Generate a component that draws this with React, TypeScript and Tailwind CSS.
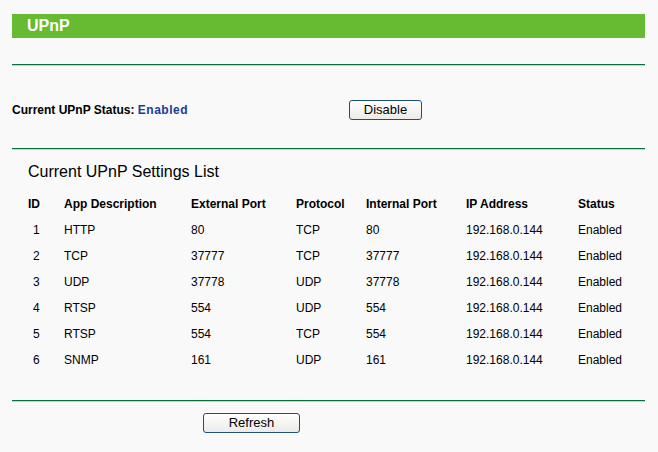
import React from "react";

const rows = [
  ["1", "HTTP", "80", "TCP", "80", "192.168.0.144", "Enabled"],
  ["2", "TCP", "37777", "TCP", "37777", "192.168.0.144", "Enabled"],
  ["3", "UDP", "37778", "UDP", "37778", "192.168.0.144", "Enabled"],
  ["4", "RTSP", "554", "UDP", "554", "192.168.0.144", "Enabled"],
  ["5", "RTSP", "554", "TCP", "554", "192.168.0.144", "Enabled"],
  ["6", "SNMP", "161", "UDP", "161", "192.168.0.144", "Enabled"],
];

const headers = ["ID", "App Description", "External Port", "Protocol", "Internal Port", "IP Address", "Status"];
const widths = ["w-[36px]", "w-[127px]", "w-[105px]", "w-[70px]", "w-[100px]", "w-[112px]", "w-[67px]"];

function Line() {
  return <div className="h-[2px] border-t border-t-[#0a6e3a] border-b border-b-[#b7dcc4]" />;
}

function Btn({ label, w }: { label: string; w: string }) {
  return (
    <button
      className={`${w} h-[20px] rounded-[3px] border border-[#1f4f7f] bg-gradient-to-b from-white to-[#ecebe6] text-[13px] leading-[18px] text-black`}
    >
      {label}
    </button>
  );
}

export default function App() {
  return (
    <div className="w-[658px] h-[452px] bg-[#f9f9f9] font-['Liberation_Sans',Arial,sans-serif] text-black">
      <div className="ml-[12px] w-[633px] pt-[14px]">
        <div className="h-[24px] bg-[#66bb33] pl-[15px] text-[16px] font-bold leading-[24px] text-white">UPnP</div>
        <div className="mt-[26px]">
          <Line />
        </div>
        <div className="mt-[34px] flex h-[20px] items-center">
          <div className="w-[337px] text-[12px] font-bold">
            Current UPnP Status: <span className="text-[#1a3c96] tracking-[0.5px]">Enabled</span>
          </div>
          <Btn label="Disable" w="w-[73px]" />
        </div>
        <div className="mt-[28px]">
          <Line />
        </div>
        <div className="mt-[12px] pl-[16px] text-[16px] leading-[20px]">Current UPnP Settings List</div>
        <div className="mt-[9px] pl-[16px] text-[12px]">
          <div className="flex h-[26px] items-center font-bold">
            {headers.map((h, i) => (
              <div key={h} className={`${widths[i]} shrink-0`}>{h}</div>
            ))}
          </div>
          {rows.map((r) => (
            <div key={r[0]} className="flex h-[26px] items-center">
              {r.map((c, i) => (
                <div key={i} className={`${widths[i]} shrink-0 ${i === 0 ? "pl-[5px]" : ""}`}>{c}</div>
              ))}
            </div>
          ))}
        </div>
        <div className="mt-[27px]">
          <Line />
        </div>
        <div className="mt-[8px] pl-[191px]">
          <Btn label="Refresh" w="w-[97px]" />
        </div>
      </div>
    </div>
  );
}
